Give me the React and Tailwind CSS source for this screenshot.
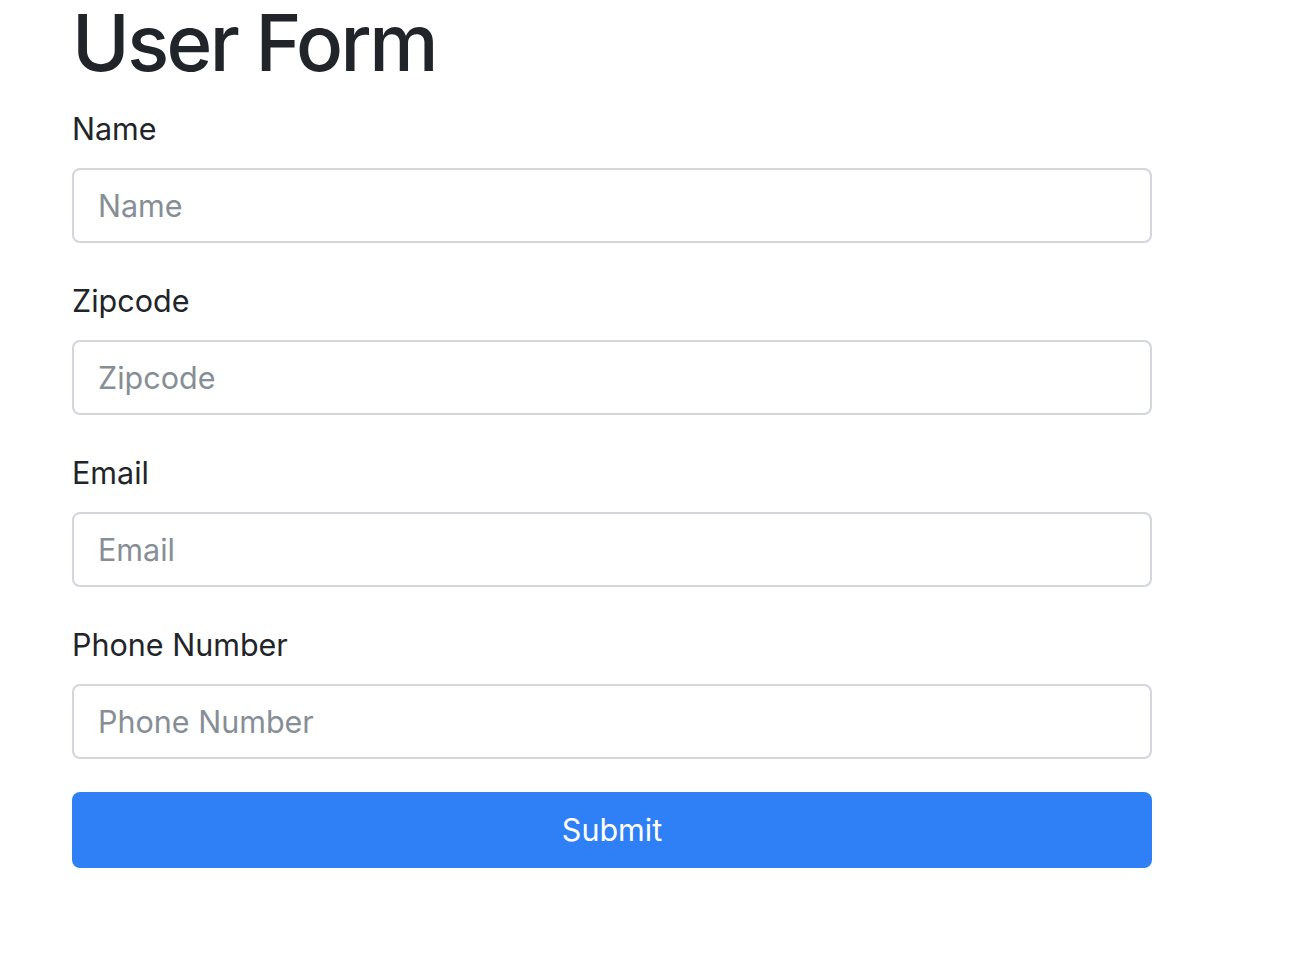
import React from 'react';

const fields = ['Name', 'Zipcode', 'Email', 'Phone Number'];

const App = () => {
  return (
    <div className="min-h-screen bg-white text-[#212529]" style={{ fontFamily: 'Inter, "Noto Sans", sans-serif' }}>
      <div className="ml-[72px] w-[1080px]">
        {/* Header */}
        <h1 className="text-[78px] leading-[86px] font-medium mb-[20px] tracking-[-2.6px]">User Form</h1>

        <form onSubmit={(e) => e.preventDefault()}>
          {fields.map((f) => (
            <div key={f} className="mb-[35px]">
              <label className="block text-[30.5px] leading-[46px] mb-[16px]">{f}</label>
              <input
                type="text"
                placeholder={f}
                className="block w-full h-[75px] pl-[24px] pr-[24px] text-[30.5px] border-2 border-[#d3d6da] rounded-[8px] placeholder:text-[#868e96] outline-none"
              />
            </div>
          ))}
          <button
            type="submit"
            className="block w-full h-[76px] -mt-[2px] bg-[#2f80f7] text-white text-[30.5px] rounded-[8px]"
          >
            Submit
          </button>
        </form>
      </div>
    </div>
  );
};

export default App;
